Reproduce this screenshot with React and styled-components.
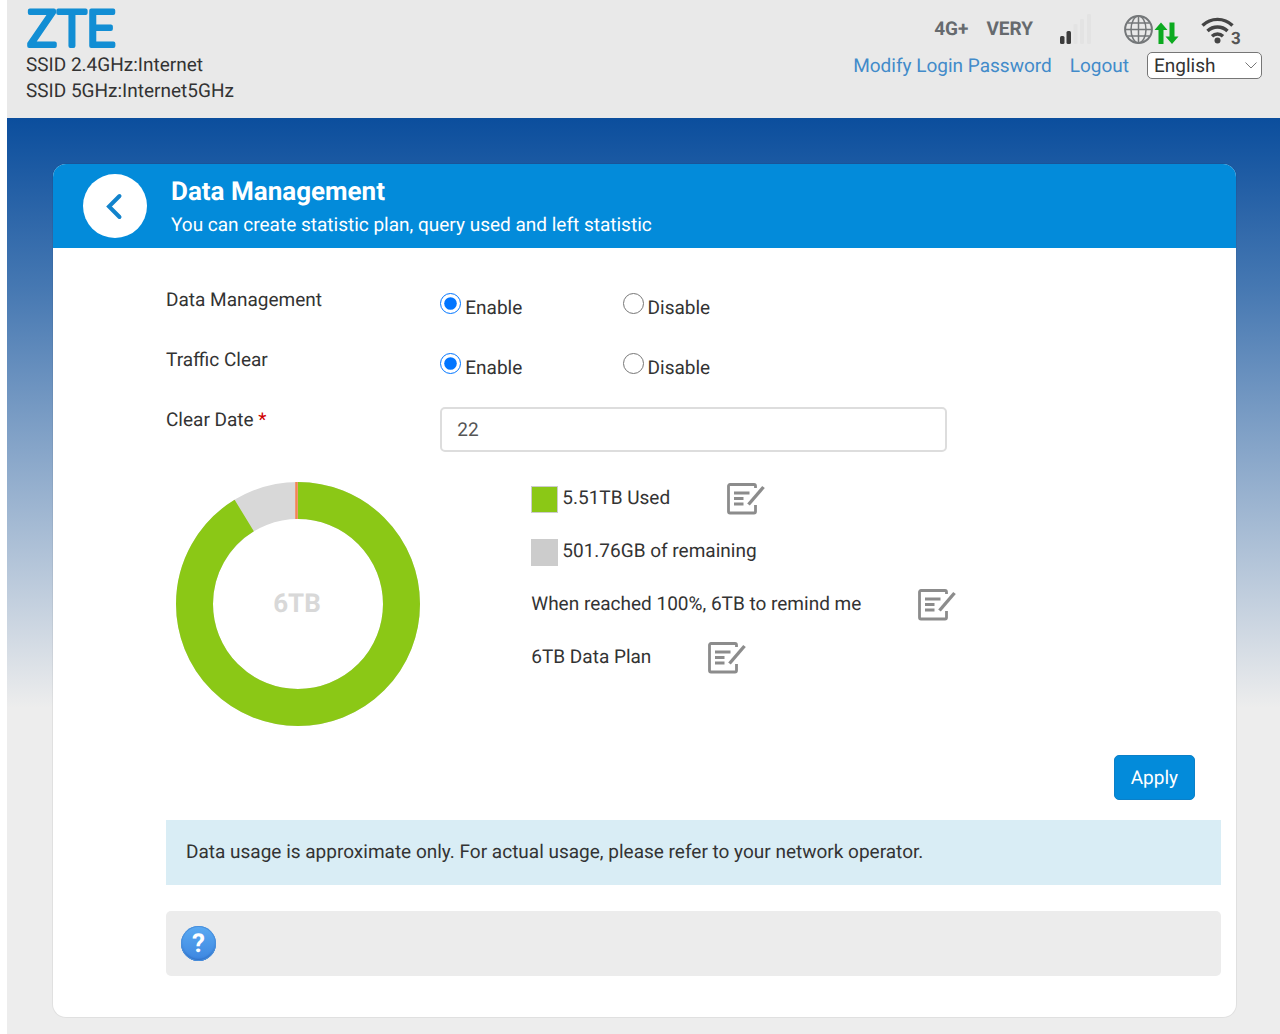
import React, { useState } from 'react';
import styled, { createGlobalStyle } from 'styled-components';

const GlobalStyle = createGlobalStyle`
  * {
    box-sizing: border-box;
  }

  body {
    margin: 0;
    background: #fff;
    color: #333;
    font-family: Roboto, 'Liberation Sans', sans-serif;
    font-size: 19px;
    line-height: 26px;
    text-rendering: geometricPrecision;
  }

  input,
  select,
  button {
    font: inherit;
    color: inherit;
    text-rendering: inherit;
  }
`;

const Page = styled.div`
  display: flex;
  flex-direction: column;
  min-height: 100vh;
  margin-left: 7px;
`;

const Header = styled.header`
  display: flex;
  justify-content: space-between;
  padding: 7px 18px 14px 19px;
  background: #e9e9e9;
`;

const Brand = styled.div`
  display: flex;
  flex-direction: column;
  align-items: flex-start;
`;

const Logo = styled.svg`
  display: block;
  overflow: visible;
  width: 90px;
  height: 45px;

  text {
    font-size: 50px;
    font-weight: 300;
    fill: #128ed4;
    stroke: #128ed4;
    stroke-width: 4;
    stroke-linejoin: round;
  }
`;

const Tools = styled.div`
  display: flex;
  flex-direction: column;
  align-items: flex-end;
`;

const StatusBar = styled.div`
  display: flex;
  align-items: center;
  height: 45px;
  padding-right: 21px;
  color: #666a6e;
  font-weight: 700;
`;

const StatusText = styled.span`
  margin: 0 18px 2px 0;
`;

const StatusIcon = styled.svg`
  display: block;
  overflow: visible;
  margin-left: ${({ $gap }) => $gap || 0}px;
`;

const Links = styled.nav`
  display: flex;
  align-items: center;
  gap: 18px;

  a {
    color: #428bca;
    text-decoration: none;
  }
`;

const SelectBox = styled.div`
  position: relative;
  width: 115px;

  select {
    appearance: none;
    display: block;
    width: 100%;
    height: 27px;
    padding: 0 22px 0 6px;
    border: 1px solid #767676;
    border-radius: 5px;
    background: #fff;
    line-height: 24px;
  }

  svg {
    position: absolute;
    top: 9px;
    right: 4px;
    pointer-events: none;
  }
`;

const Main = styled.main`
  flex: 1;
  padding: 46px 44px 17px 46px;
  background: linear-gradient(#0b4e9d 0, #4678b2 170px, #ededed 590px);
`;

const Card = styled.section`
  overflow: hidden;
  border-radius: 13px;
  background: #fff;
  box-shadow: 0 0 0 1px rgba(0, 0, 0, 0.05);
`;

const CardHeader = styled.div`
  display: flex;
  align-items: center;
  gap: 24px;
  padding: 10px 30px;
  background: #038bda;
  color: #fff;

  h1 {
    margin: 2px 0 5px;
    font-size: 26px;
    font-weight: 700;
    line-height: 30px;
  }

  p {
    margin: 0;
  }
`;

const BackButton = styled.button`
  display: flex;
  align-items: center;
  justify-content: center;
  width: 64px;
  height: 64px;
  padding: 0;
  border: 0;
  border-radius: 50%;
  background: #fff;
  cursor: pointer;
`;

const CardBody = styled.div`
  padding: 39px 15px 41px 113px;
`;

const Row = styled.div`
  display: grid;
  grid-template-columns: 26% 48%;
  align-items: start;
  min-height: 60px;
`;

const RadioGroup = styled.div`
  display: grid;
  grid-template-columns: 36% 36%;
  padding-top: 6px;

  label {
    display: flex;
    align-items: flex-start;
    gap: 4px;
  }

  input {
    width: 21px;
    height: 21px;
    margin: 0;
  }

  span {
    margin-top: 2px;
  }
`;

const Required = styled.span`
  color: #d00000;
`;

const TextInput = styled.input`
  width: 100%;
  height: 45px;
  padding: 0 15px;
  border: 2px solid #ddd;
  border-radius: 5px;
  background: #fff;
  color: #555;
`;

const Usage = styled.div`
  display: grid;
  grid-template-columns: 34% 1fr;
  align-items: start;
  padding: 4px 0 0 10px;
`;

const Chart = styled.svg`
  display: block;
  width: 244px;
  height: 244px;
  margin-top: 11px;

  text {
    fill: #d8d8d8;
    font-size: 26px;
    font-weight: 700;
  }
`;

const Legend = styled.div`
  display: flex;
  flex-direction: column;
`;

const LegendRow = styled.div`
  display: flex;
  align-items: center;
  height: 53px;
`;

const Swatch = styled.span`
  width: 27px;
  height: 27px;
  margin: 3px 4px 0 0;
  border: 1px solid #ccc;
  background: ${({ $color }) => $color};
`;

const EditButton = styled.button`
  margin: 2px 0 0 57px;
  padding: 0;
  border: 0;
  background: none;
  cursor: pointer;

  svg {
    display: block;
  }
`;

const Actions = styled.div`
  display: flex;
  justify-content: flex-end;
  padding: 29px 26px 20px;
`;

const ApplyButton = styled.button`
  height: 45px;
  padding: 0 16px;
  border: 1px solid #0b80c8;
  border-radius: 5px;
  background: #038bda;
  color: #fff;
  cursor: pointer;
`;

const Notice = styled.p`
  margin: 0 0 26px;
  padding: 19px 20px 20px;
  background: #d9edf5;
`;

const Help = styled.div`
  display: flex;
  padding: 15px;
  border-radius: 5px;
  background: #ececec;
`;

const HelpButton = styled.button`
  width: 35px;
  height: 35px;
  padding: 0;
  border: 0;
  border-radius: 50%;
  background: linear-gradient(#5aaaf2, #3d86e0);
  box-shadow: inset 0 0 0 1px #4a90dc, inset 0 -2px 2px #2f6fc4;
  color: #fff;
  font-size: 26px;
  font-weight: 700;
  cursor: pointer;
`;

const SignalIcon = () => (
  <StatusIcon $gap={9} width="32" height="32" viewBox="0 0 32 32" aria-hidden="true">
    <rect x="0" y="22" width="4.500" height="8" rx="1.500" fill="#3c3c3c" />
    <rect x="6.500" y="17" width="4.500" height="13" rx="1.500" fill="#3c3c3c" />
    <rect x="13.500" y="10" width="4" height="20" rx="1" fill="#e3e3e3" />
    <rect x="20" y="5" width="4" height="25" rx="1" fill="#e3e3e3" />
    <rect x="27" y="0" width="4" height="30" rx="1" fill="#e3e3e3" />
  </StatusIcon>
);

const GlobeIcon = () => (
  <StatusIcon $gap={32} width="56" height="32" viewBox="0 0 56 32" aria-hidden="true">
    <g fill="none" stroke="#747779" strokeWidth="1.5">
      <circle cx="14.500" cy="15.500" r="13.400" strokeWidth="2" />
      <ellipse cx="14.500" cy="15.500" rx="7.500" ry="13.400" />
      <path d="M14.500 2v27M1 15.500h27M3.500 9h22M3.500 22h22" />
    </g>
    <g fill="#0caa20">
      <path d="M37 8.500l6.500 7.500h-4v14h-5V16h-4z" />
      <path d="M48 30l6.500-7.500h-4v-14h-5v14h-4z" />
    </g>
  </StatusIcon>
);

const WifiIcon = () => (
  <StatusIcon $gap={21} width="40" height="32" viewBox="0 0 40 32" aria-hidden="true">
    <g fill="none" stroke="#444" strokeWidth="3.400">
      <path d="M1.500 11.500a21.500 21.500 0 0 1 30 0" />
      <path d="M6.500 17a14.500 14.500 0 0 1 20 0" />
      <path d="M11 22.200a8 8 0 0 1 11 0" />
    </g>
    <circle cx="16.500" cy="26.500" r="3" fill="#444" />
    <text x="30" y="30" fontSize="17" fontWeight="700" fill="#555">3</text>
  </StatusIcon>
);

const EditIcon = () => (
  <svg width="38" height="32" viewBox="0 0 38 32" fill="none" stroke="#8c8c8c" strokeWidth="2.800">
    <path d="M28.500 5V3a1.500 1.500 0 0 0-1.500-1.500H3A1.500 1.500 0 0 0 1.500 3v25.500A1.500 1.500 0 0 0 3 30h24a1.500 1.500 0 0 0 1.500-1.500V22" />
    <path d="M7 10h15.500M7 15.500h9.500M7 21h9.500" />
    <path d="M21.500 21.500L36.500 4" strokeWidth="3.400" />
  </svg>
);

const UsageChart = ({ used, total }) => (
  <Chart viewBox="0 0 244 244" role="img" aria-label="Data usage">
    <g fill="none" strokeWidth="37" transform="rotate(-90 122 122)">
      <circle cx="122" cy="122" r="103.500" stroke="#d8d8d8" />
      <circle
        cx="122"
        cy="122"
        r="103.500"
        stroke="#8bc816"
        pathLength="100"
        strokeDasharray={`${used} 100`}
      />
    </g>
    <path d="M120.500 0v37" stroke="#f58252" strokeWidth="2.500" />
    <text x="121" y="130" textAnchor="middle">{total}</text>
  </Chart>
);

const EnableRow = ({ label, name }) => {
  const [enabled, setEnabled] = useState(true);

  return (
    <Row>
      <span>{label}</span>
      <RadioGroup role="radiogroup" aria-label={label}>
        <label>
          <input type="radio" name={name} checked={enabled} onChange={() => setEnabled(true)} />
          <span>Enable</span>
        </label>
        <label>
          <input type="radio" name={name} checked={!enabled} onChange={() => setEnabled(false)} />
          <span>Disable</span>
        </label>
      </RadioGroup>
    </Row>
  );
};

const LegendItem = ({ color, text, editable }) => (
  <LegendRow>
    {color && <Swatch $color={color} />}
    <span>{text}</span>
    {editable && (
      <EditButton type="button" aria-label="Edit">
        <EditIcon />
      </EditButton>
    )}
  </LegendRow>
);

const App = () => {
  const [clearDate, setClearDate] = useState('22');

  return (
    <Page>
      <GlobalStyle />
      <Header>
        <Brand>
          <Logo viewBox="0 0 90 45">
            <text x="1" y="39">ZTE</text>
          </Logo>
          <span>SSID 2.4GHz:Internet</span>
          <span>SSID 5GHz:Internet5GHz</span>
        </Brand>
        <Tools>
          <StatusBar>
            <StatusText>4G+</StatusText>
            <StatusText>VERY</StatusText>
            <SignalIcon />
            <GlobeIcon />
            <WifiIcon />
          </StatusBar>
          <Links>
            <a href="#password">Modify Login Password</a>
            <a href="#logout">Logout</a>
            <SelectBox>
              <select aria-label="Language" defaultValue="en">
                <option value="en">English</option>
              </select>
              <svg width="14" height="9" viewBox="0 0 14 9" fill="none" stroke="#777">
                <path d="M1.500 1.500L7 7l5.500-5.500" />
              </svg>
            </SelectBox>
          </Links>
        </Tools>
      </Header>

      <Main>
        <Card>
          <CardHeader>
            <BackButton type="button" aria-label="Back">
              <svg width="18" height="28" viewBox="0 0 18 28" fill="none" stroke="#1283cc" strokeWidth="4">
                <path d="M13.500 4L3 14.500l10.500 10.500" strokeLinecap="round" />
              </svg>
            </BackButton>
            <div>
              <h1>Data Management</h1>
              <p>You can create statistic plan, query used and left statistic</p>
            </div>
          </CardHeader>

          <CardBody>
            <EnableRow label="Data Management" name="management" />
            <EnableRow label="Traffic Clear" name="traffic" />
            <Row>
              <label htmlFor="clear-date">
                Clear Date <Required>*</Required>
              </label>
              <TextInput
                id="clear-date"
                value={clearDate}
                onChange={(e) => setClearDate(e.target.value)}
              />
            </Row>

            <Usage>
              <UsageChart used={91.3} total="6TB" />
              <Legend>
                <LegendItem color="#8bc816" text="5.51TB Used" editable />
                <LegendItem color="#ccc" text="501.76GB of remaining" />
                <LegendItem text="When reached 100%, 6TB to remind me" editable />
                <LegendItem text="6TB Data Plan" editable />
              </Legend>
            </Usage>

            <Actions>
              <ApplyButton type="button">Apply</ApplyButton>
            </Actions>

            <Notice>
              Data usage is approximate only. For actual usage, please refer to your network operator.
            </Notice>
            <Help>
              <HelpButton type="button" aria-label="Help">?</HelpButton>
            </Help>
          </CardBody>
        </Card>
      </Main>
    </Page>
  );
};

export default App;
